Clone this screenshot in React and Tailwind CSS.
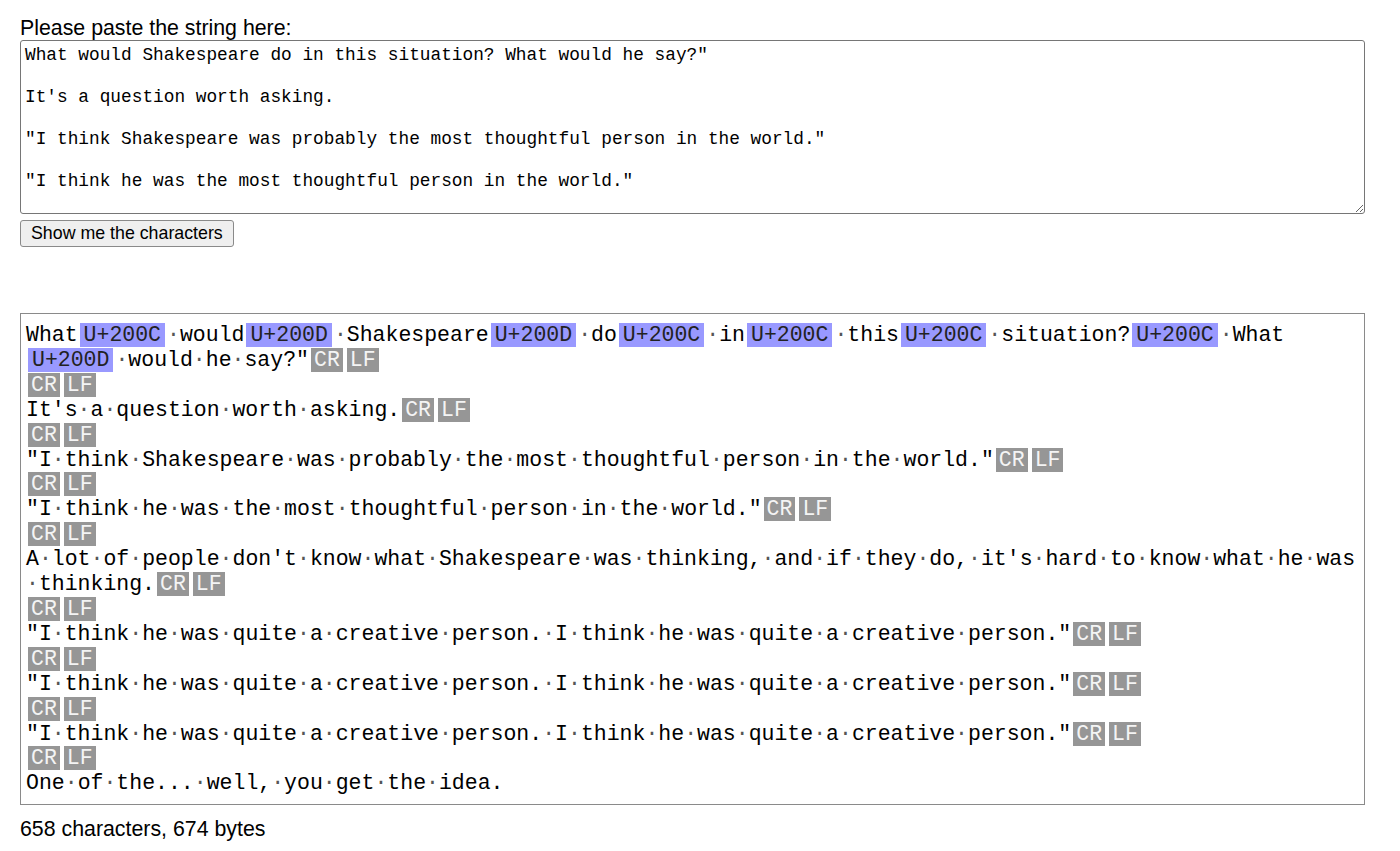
import React from 'react';

const QUOTE = '"I think he was quite a creative person. I think he was quite a creative person."\r\n\r\n';

const TEXT =
  'What\u200C would\u200D Shakespeare\u200D do\u200C in\u200C this\u200C situation?\u200C What\u200D would he say?"\r\n\r\n' +
  "It's a question worth asking.\r\n\r\n" +
  '"I think Shakespeare was probably the most thoughtful person in the world."\r\n\r\n' +
  '"I think he was the most thoughtful person in the world."\r\n\r\n' +
  "A lot of people don't know what Shakespeare was thinking, and if they do, it's hard to know what he was thinking.\r\n\r\n" +
  QUOTE + QUOTE + QUOTE +
  'One of the... well, you get the idea.';

const PLAIN = TEXT.replace(/[\u200C\u200D]/g, '').replace(/\r/g, '');

const renderChars = (str) => {
  const out = [];
  let buf = '';
  let k = 0;
  const flush = () => {
    if (buf) out.push(<span key={k++}>{buf}</span>);
    buf = '';
  };
  for (const ch of str) {
    if (ch === '\u200C' || ch === '\u200D') {
      flush();
      const code = 'U+' + ch.codePointAt(0).toString(16).toUpperCase();
      out.push(<wbr key={k++} />);
      out.push(
        <span key={k++} className="bg-[#9999ff] text-[#222] mx-[2px] px-[4px] whitespace-nowrap">
          {code}
        </span>
      );
    } else if (ch === '\r' || ch === '\n') {
      flush();
      out.push(
        <span key={k++} className="bg-[#969696] text-[#f4f4f4] mx-[2px] px-[3px] whitespace-nowrap">
          {ch === '\r' ? 'CR' : 'LF'}
        </span>
      );
      if (ch === '\n') out.push(<br key={k++} />);
    } else if (ch === ' ') {
      flush();
      out.push(<wbr key={k++} />);
      out.push(<span key={k++} className="text-[#555]">·</span>);
    } else {
      buf += ch;
    }
  }
  flush();
  return out;
};

const App = () => {
  return (
    <div className="min-h-screen bg-white pl-[20px] pr-[35px] pt-[16px] font-['Liberation_Sans',Arial,sans-serif] text-black">
      <div className="text-[21.33px] leading-[24px]">Please paste the string here:</div>
      <textarea
        className="block w-full h-[174px] border border-[#767676] rounded-[3px] px-[4px] pt-[4px] pb-[2px] font-['Liberation_Mono','Courier_New',monospace] text-[17.8px] leading-[21px] overflow-hidden bg-white"
        defaultValue={PLAIN}
        spellCheck={false}
      />
      <button className="block mt-[6px] h-[27px] px-[10px] border border-[#8a8a8a] rounded-[3px] bg-[#efefef] text-[17.8px] leading-none">
        Show me the characters
      </button>

      <div className="mt-[66px] border border-[#8a8a8a] pl-[5px] pr-[5px] pt-[9px] pb-[8px] font-['Liberation_Mono','Courier_New',monospace] text-[21.5px] leading-[24.9px]">
        {renderChars(TEXT)}
      </div>

      <div className="mt-[12px] text-[21.33px] leading-[24px]">658 characters, 674 bytes</div>
    </div>
  );
};

export default App;
